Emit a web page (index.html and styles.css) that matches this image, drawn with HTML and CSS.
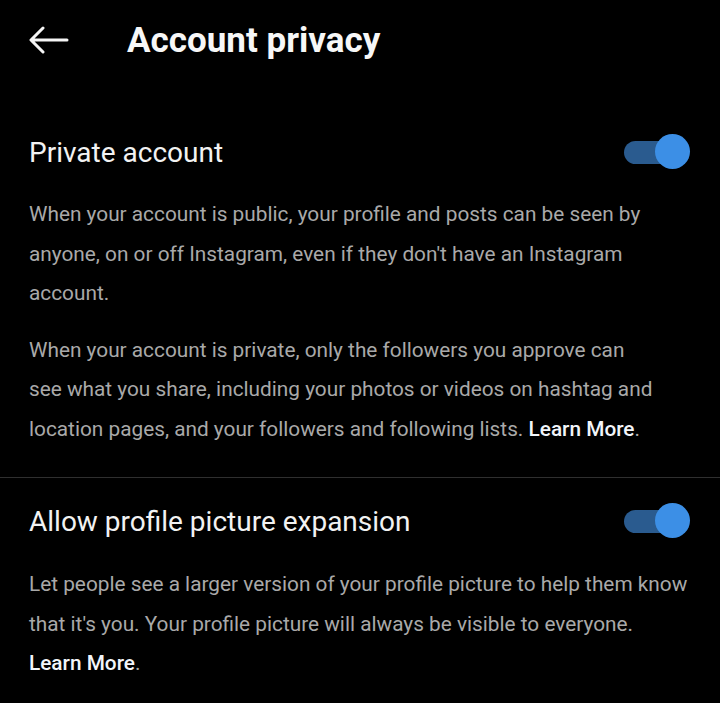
FILE: index.html
```html
<!DOCTYPE html>
<html lang="en">
<head>
<meta charset="utf-8">
<link rel="stylesheet" href="styles.css">
</head>
<body>
<div class="screen">
  <header class="topbar">
    <svg class="back" width="40" height="28" viewBox="0 0 40 28" aria-hidden="true">
      <path d="M38 14H3M14 2L2 14l12 12" fill="none" stroke="#f5f5f5" stroke-width="3" stroke-linecap="round" stroke-linejoin="round"/>
    </svg>
    <h1 class="title">Account privacy</h1>
  </header>

  <section class="setting first">
    <div class="row">
      <h2 class="label">Private account</h2>
      <span class="toggle"><span class="track"></span><span class="knob"></span></span>
    </div>
    <div class="texts">
      <p class="desc">When your account is public, your profile and posts can be seen by anyone, on or off Instagram, even if they don't have an Instagram account.</p>
      <p class="desc">When your account is private, only the followers you approve can see what you share, including your photos or videos on hashtag and location pages, and your followers and following lists. <span class="link">Learn More</span>.</p>
    </div>
  </section>

  <hr class="divider">

  <section class="setting second">
    <div class="row">
      <h2 class="label">Allow profile picture expansion</h2>
      <span class="toggle"><span class="track"></span><span class="knob"></span></span>
    </div>
    <div class="texts">
      <p class="desc">Let people see a larger version of your profile picture to help them know that it's you. Your profile picture will always be visible to everyone. <span class="link">Learn More</span>.</p>
    </div>
  </section>
</div>
</body>
</html>
```
FILE: styles.css
```css
* { box-sizing: border-box; }
html, body {
  margin: 0;
  padding: 0;
  background: #000;
}
body {
  font-family: Roboto, "Noto Sans", "Liberation Sans", sans-serif;
  color: #f5f5f5;
  width: 720px;
  height: 703px;
  overflow: hidden;
}
.topbar {
  display: flex;
  align-items: center;
  height: 80px;
  padding-left: 29px;
}
.back {
  flex: none;
  display: block;
}
.title {
  margin: 0 0 0 58px;
  font-size: 35px;
  font-weight: 700;
  color: #f7f7f7;
}
.setting {
  padding: 0 26px 0 29px;
}
.setting.first {
  padding-top: 34px;
}
.setting.first .texts {
  padding-right: 34px;
}
.row {
  display: flex;
  align-items: center;
  justify-content: space-between;
  height: 76px;
}
.label {
  margin: 0;
  font-size: 28px;
  font-weight: 400;
  color: #f2f2f2;
}
.toggle {
  position: relative;
  width: 66px;
  height: 36px;
  flex: none;
  margin-right: 4px;
}
.track {
  position: absolute;
  left: 0;
  top: 7px;
  width: 50px;
  height: 23px;
  border-radius: 12px;
  background: #2a5b8f;
}
.knob {
  position: absolute;
  right: 0;
  top: 0;
  width: 35px;
  height: 35px;
  border-radius: 50%;
  background: #3c8fe6;
}
.desc {
  margin: 5px 0 0;
  font-size: 20.8px;
  line-height: 39.5px;
  color: #a9a9a9;
}
.desc + .desc {
  margin-top: 17px;
}
.setting.second .desc {
  margin-top: 6px;
}
.link {
  color: #f2f5fa;
  font-weight: 500;
  white-space: nowrap;
}
.divider {
  border: 0;
  border-top: 1px solid #2f2f2f;
  margin: 28px 0 0;
}
.setting.second {
  padding-top: 5px;
}
```
